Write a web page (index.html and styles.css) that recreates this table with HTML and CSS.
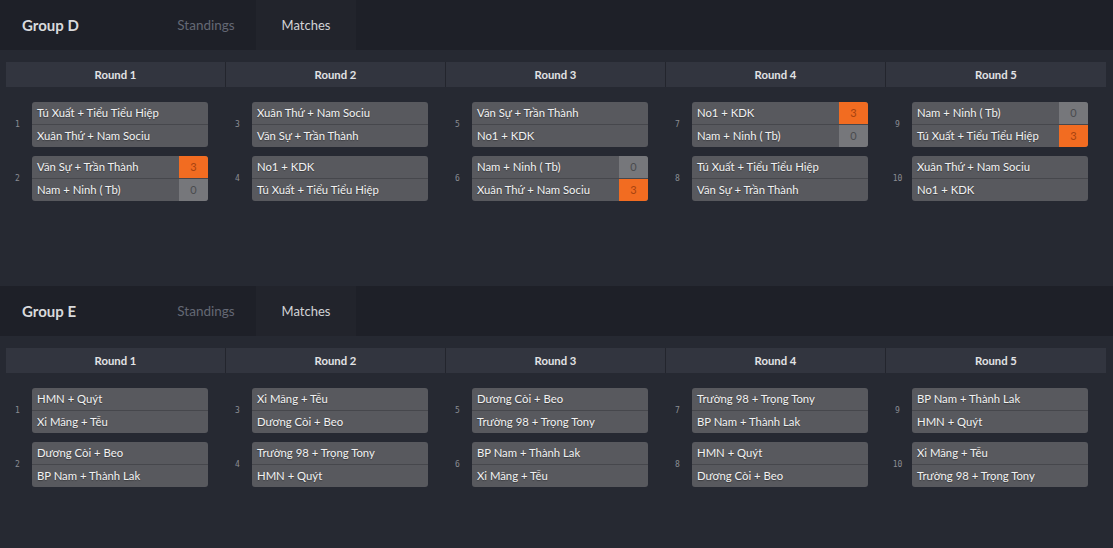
FILE: index.html
```html
<!DOCTYPE html>
<html lang="vi">
<head>
<meta charset="utf-8">
<title>Groups</title>
<link rel="stylesheet" href="styles.css">
</head>
<body>
<section class="group">
  <header class="group-head">
    <h2 class="group-title">Group D</h2>
    <nav class="tabs">
      <span class="tab">Standings</span>
      <span class="tab active">Matches</span>
    </nav>
  </header>
  <div class="group-body">
    <div class="round-bar">
      <div class="round-name">Round 1</div>
      <div class="round-name">Round 2</div>
      <div class="round-name">Round 3</div>
      <div class="round-name">Round 4</div>
      <div class="round-name">Round 5</div>
    </div>
    <div class="rounds">
      <div class="round">
        <div class="match"><span class="num">1</span><div class="card">
          <div class="row"><span class="name">Tú Xuất + Tiểu Tiểu Hiệp</span></div>
          <div class="row"><span class="name">Xuân Thứ + Nam Sociu</span></div>
        </div></div>
        <div class="match"><span class="num">2</span><div class="card">
          <div class="row"><span class="name">Văn Sự + Trần Thành</span><span class="score win">3</span></div>
          <div class="row"><span class="name">Nam + Ninh ( Tb)</span><span class="score">0</span></div>
        </div></div>
      </div>
      <div class="round">
        <div class="match"><span class="num">3</span><div class="card">
          <div class="row"><span class="name">Xuân Thứ + Nam Sociu</span></div>
          <div class="row"><span class="name">Văn Sự + Trần Thành</span></div>
        </div></div>
        <div class="match"><span class="num">4</span><div class="card">
          <div class="row"><span class="name">No1 + KDK</span></div>
          <div class="row"><span class="name">Tú Xuất + Tiểu Tiểu Hiệp</span></div>
        </div></div>
      </div>
      <div class="round">
        <div class="match"><span class="num">5</span><div class="card">
          <div class="row"><span class="name">Văn Sự + Trần Thành</span></div>
          <div class="row"><span class="name">No1 + KDK</span></div>
        </div></div>
        <div class="match"><span class="num">6</span><div class="card">
          <div class="row"><span class="name">Nam + Ninh ( Tb)</span><span class="score">0</span></div>
          <div class="row"><span class="name">Xuân Thứ + Nam Sociu</span><span class="score win">3</span></div>
        </div></div>
      </div>
      <div class="round">
        <div class="match"><span class="num">7</span><div class="card">
          <div class="row"><span class="name">No1 + KDK</span><span class="score win">3</span></div>
          <div class="row"><span class="name">Nam + Ninh ( Tb)</span><span class="score">0</span></div>
        </div></div>
        <div class="match"><span class="num">8</span><div class="card">
          <div class="row"><span class="name">Tú Xuất + Tiểu Tiểu Hiệp</span></div>
          <div class="row"><span class="name">Văn Sự + Trần Thành</span></div>
        </div></div>
      </div>
      <div class="round">
        <div class="match"><span class="num">9</span><div class="card">
          <div class="row"><span class="name">Nam + Ninh ( Tb)</span><span class="score">0</span></div>
          <div class="row"><span class="name">Tú Xuất + Tiểu Tiểu Hiệp</span><span class="score win">3</span></div>
        </div></div>
        <div class="match"><span class="num">10</span><div class="card">
          <div class="row"><span class="name">Xuân Thứ + Nam Sociu</span></div>
          <div class="row"><span class="name">No1 + KDK</span></div>
        </div></div>
      </div>
    </div>
  </div>
</section>

<section class="group">
  <header class="group-head">
    <h2 class="group-title">Group E</h2>
    <nav class="tabs">
      <span class="tab">Standings</span>
      <span class="tab active">Matches</span>
    </nav>
  </header>
  <div class="group-body">
    <div class="round-bar">
      <div class="round-name">Round 1</div>
      <div class="round-name">Round 2</div>
      <div class="round-name">Round 3</div>
      <div class="round-name">Round 4</div>
      <div class="round-name">Round 5</div>
    </div>
    <div class="rounds">
      <div class="round">
        <div class="match"><span class="num">1</span><div class="card">
          <div class="row"><span class="name">HMN + Quýt</span></div>
          <div class="row"><span class="name">Xi Măng + Tễu</span></div>
        </div></div>
        <div class="match"><span class="num">2</span><div class="card">
          <div class="row"><span class="name">Dương Còi + Beo</span></div>
          <div class="row"><span class="name">BP Nam + Thành Lak</span></div>
        </div></div>
      </div>
      <div class="round">
        <div class="match"><span class="num">3</span><div class="card">
          <div class="row"><span class="name">Xi Măng + Tễu</span></div>
          <div class="row"><span class="name">Dương Còi + Beo</span></div>
        </div></div>
        <div class="match"><span class="num">4</span><div class="card">
          <div class="row"><span class="name">Trường 98 + Trọng Tony</span></div>
          <div class="row"><span class="name">HMN + Quýt</span></div>
        </div></div>
      </div>
      <div class="round">
        <div class="match"><span class="num">5</span><div class="card">
          <div class="row"><span class="name">Dương Còi + Beo</span></div>
          <div class="row"><span class="name">Trường 98 + Trọng Tony</span></div>
        </div></div>
        <div class="match"><span class="num">6</span><div class="card">
          <div class="row"><span class="name">BP Nam + Thành Lak</span></div>
          <div class="row"><span class="name">Xi Măng + Tễu</span></div>
        </div></div>
      </div>
      <div class="round">
        <div class="match"><span class="num">7</span><div class="card">
          <div class="row"><span class="name">Trường 98 + Trọng Tony</span></div>
          <div class="row"><span class="name">BP Nam + Thành Lak</span></div>
        </div></div>
        <div class="match"><span class="num">8</span><div class="card">
          <div class="row"><span class="name">HMN + Quýt</span></div>
          <div class="row"><span class="name">Dương Còi + Beo</span></div>
        </div></div>
      </div>
      <div class="round">
        <div class="match"><span class="num">9</span><div class="card">
          <div class="row"><span class="name">BP Nam + Thành Lak</span></div>
          <div class="row"><span class="name">HMN + Quýt</span></div>
        </div></div>
        <div class="match"><span class="num">10</span><div class="card">
          <div class="row"><span class="name">Xi Măng + Tễu</span></div>
          <div class="row"><span class="name">Trường 98 + Trọng Tony</span></div>
        </div></div>
      </div>
    </div>
  </div>
</section>
</body>
</html>
```
FILE: styles.css
```css
* { box-sizing: border-box; }
html, body {
  margin: 0;
  padding: 0;
  background: #262932;
  font-family: Lato, "Noto Sans", sans-serif;
  color: #e4e4e4;
}
.group {
  height: 286px;
  display: flex;
  flex-direction: column;
}
.group-head {
  height: 50px;
  background: #1e2028;
  display: flex;
  align-items: stretch;
}
.group-title {
  margin: 0;
  width: 156px;
  padding-left: 22px;
  padding-bottom: 1px;
  font-size: 15px;
  font-weight: 700;
  color: #d9dadc;
  display: flex;
  align-items: center;
}
.tabs {
  display: flex;
}
.tab {
  width: 100px;
  display: flex;
  align-items: center;
  justify-content: center;
  padding-bottom: 1px;
  font-size: 13.5px;
  color: #646874;
}
.tab.active {
  background: #22242c;
  color: #d2d3d6;
  font-size: 13px;
}
.group-body {
  padding: 12px 7px 0 6px;
}
.round-bar {
  display: grid;
  grid-template-columns: repeat(5, 220px);
  background: #32353f;
  height: 25px;
}
.round-name {
  display: flex;
  align-items: center;
  justify-content: center;
  font-size: 11.3px;
  font-weight: 700;
  color: #e2e3e5;
  border-right: 1px solid #23252d;
}
.round-name:last-child { border-right: none; }
.rounds {
  display: grid;
  grid-template-columns: repeat(5, 220px);
  padding-top: 15px;
}
.round {
  display: flex;
  flex-direction: column;
  gap: 9px;
}
.match {
  display: flex;
  align-items: center;
}
.num {
  width: 26px;
  padding-right: 3px;
  text-align: center;
  font-family: "DejaVu Sans Mono", monospace;
  font-size: 8px;
  color: #8b8d92;
}
.card {
  width: 176px;
  background: #58595e;
  border-radius: 3px;
  overflow: hidden;
}
.row {
  height: 22px;
  display: flex;
  align-items: stretch;
}
.row + .row {
  border-top: 1px solid #46474c;
  height: 23px;
}
.name {
  flex: 1;
  padding-left: 5px;
  padding-bottom: 2px;
  display: flex;
  align-items: center;
  font-size: 11.3px;
  color: #f2f2f2;
  text-shadow: 0 1px 1px rgba(0, 0, 0, 0.35);
  white-space: nowrap;
}
.score {
  width: 29px;
  display: flex;
  align-items: center;
  justify-content: center;
  padding-bottom: 1px;
  font-size: 11px;
  background: #76777b;
  color: #4a4b4e;
}
.score.win {
  background: #f26c21;
  color: #a84310;
}
```
